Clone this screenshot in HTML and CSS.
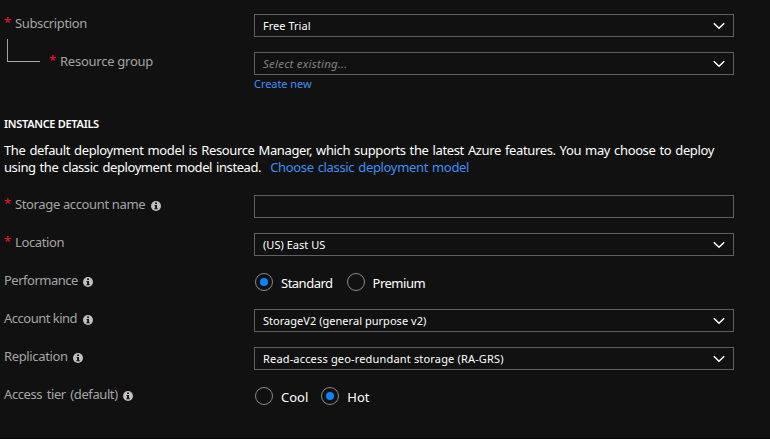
FILE: index.html
```html
<!DOCTYPE html>
<html lang="en">
<head>
<meta charset="utf-8">
<title>Create storage account</title>
<link rel="stylesheet" href="styles.css">
</head>
<body>
<svg class="defs" width="0" height="0" aria-hidden="true">
  <symbol id="chevron" viewBox="0 0 12 8"><path d="M.8 1.2 6 6.3 11.2 1.2" fill="none" stroke="currentColor" stroke-width="1.5"/></symbol>
  <symbol id="info" viewBox="0 0 10 10"><circle cx="5" cy="5" r="5" fill="currentColor"/><path d="M4.1 1.5h1.9v1.5H4.1zM3.4 3.9H6v3.4h.7v.9H3.4v-.9h.7V4.8h-.7z" fill="#111"/></symbol>
</svg>
<main class="form">
  <div class="row">
    <div class="label"><b class="req">*</b><span>Subscription</span></div>
    <div class="select"><span>Free Trial</span><svg class="chevron"><use href="#chevron"/></svg></div>
  </div>
  <div class="row">
    <div class="label nested"><i class="branch"></i><b class="req">*</b><span>Resource group</span></div>
    <div class="select placeholder"><span>Select existing...</span><svg class="chevron"><use href="#chevron"/></svg></div>
  </div>
  <a class="create">Create new</a>
  <h2>INSTANCE DETAILS</h2>
  <p class="intro"><span class="line1">The default deployment model is Resource Manager, which supports the latest Azure features. You may choose to deploy</span><br><span class="line2">using the classic deployment model instead.</span><a class="classic">Choose classic deployment model</a></p>
  <div class="row">
    <div class="label"><b class="req">*</b><span>Storage account name</span><svg class="info"><use href="#info"/></svg></div>
    <div class="select"></div>
  </div>
  <div class="row">
    <div class="label"><b class="req">*</b><span>Location</span></div>
    <div class="select"><span>(US) East US</span><svg class="chevron"><use href="#chevron"/></svg></div>
  </div>
  <div class="row">
    <div class="label tight"><span>Performance</span><svg class="info"><use href="#info"/></svg></div>
    <div class="radios"><i class="radio on"></i><span class="opt wide">Standard</span><i class="radio"></i><span class="opt wide">Premium</span></div>
  </div>
  <div class="row">
    <div class="label tight"><span>Account kind</span><svg class="info"><use href="#info"/></svg></div>
    <div class="select"><span>StorageV2 (general purpose v2)</span><svg class="chevron"><use href="#chevron"/></svg></div>
  </div>
  <div class="row">
    <div class="label"><span>Replication</span><svg class="info"><use href="#info"/></svg></div>
    <div class="select loose"><span>Read-access geo-redundant storage (RA-GRS)</span><svg class="chevron"><use href="#chevron"/></svg></div>
  </div>
  <div class="row">
    <div class="label tier"><span>Access tier (default)</span><svg class="info"><use href="#info"/></svg></div>
    <div class="radios"><i class="radio"></i><span class="opt">Cool</span><i class="radio on"></i><span class="opt">Hot</span></div>
  </div>
</main>
</body>
</html>
```
FILE: styles.css
```css
* { box-sizing: border-box; }
body { margin: 0; background: #111; color: #fff; font: 13px/17px "Noto Sans", sans-serif; overflow: hidden; }
.defs { position: absolute; }
.form { width: 770px; height: 439px; padding: 14px 0 0 4px; border-bottom: 1px solid #080808; }
.row { display: grid; grid-template-columns: 250px 480px; height: 23px; margin-bottom: 15px; }
.label { display: flex; align-items: flex-start; color: #a5a5a5; white-space: nowrap; letter-spacing: -.36px; }
.label span { padding-top: 1px; }
.label.tight { letter-spacing: -.5px; }
.label.nested { letter-spacing: -.25px; }
.label.tier { letter-spacing: -.4px; word-spacing: 1.5px; }
.req { width: 11px; color: #e81123; font-weight: 500; }
.branch { width: 33px; height: 23px; margin: -13px 9px 0 3px; border: solid #a5a5a5; border-width: 0 0 1px 1px; }
.info { width: 10px; height: 10px; margin: 6px 0 0 5.5px; color: #c0c0c0; }
.select { display: flex; align-items: center; justify-content: space-between; border: 1px solid #606060; padding: 0 8px; font-size: 11px; line-height: 21px; letter-spacing: .03px; }
.select.loose { letter-spacing: .17px; }
.chevron { width: 12px; height: 8px; }
.placeholder { font-size: 11.5px; letter-spacing: .22px; }
.placeholder span { font-style: italic; color: #808080; }
a { color: #3e8ef7; }
.create { display: block; height: 17px; margin: -15px 0 0 250px; font-size: 11px; letter-spacing: -.05px; }
h2 { margin: 23px 0 0; font-size: 11px; line-height: 17px; font-weight: 600; letter-spacing: -.3px; }
.intro { margin: 10px 0 19px; white-space: nowrap; }
.line1 { letter-spacing: -.37px; word-spacing: 1px; }
.classic { letter-spacing: -.34px; word-spacing: 1px; margin-left: 9px; }
.line2 { letter-spacing: -.41px; word-spacing: 1px; }
.radios { display: flex; align-items: center; height: 21px; padding-left: 1px; }
.radio { width: 18px; height: 18px; border: 1px solid #888; border-radius: 50%; display: grid; place-items: center; }
.radio.on::after { content: ""; width: 8px; height: 8px; border-radius: 50%; background: #0a84ff; }
.opt { margin: 3px 13px 0 8px; }
.opt.wide { letter-spacing: -.5px; margin-right: 14px; }
```
